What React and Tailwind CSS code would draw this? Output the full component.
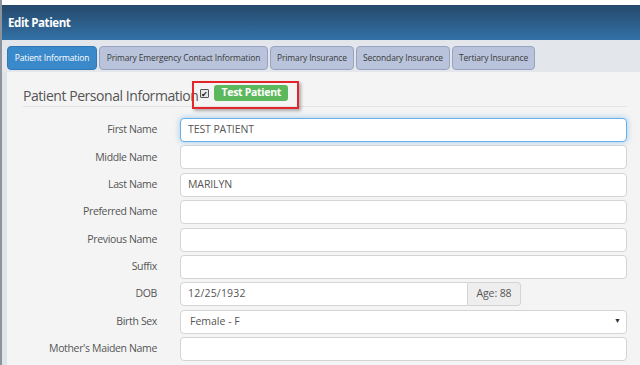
import React from 'react';

const tabs = [
    {label: 'Patient Information', w: 'w-[90px]', active: true},
    {label: 'Primary Emergency Contact Information', w: 'w-[169px]'},
    {label: 'Primary Insurance', w: 'w-[84px]'},
    {label: 'Secondary Insurance', w: 'w-[94px]'},
    {label: 'Tertiary Insurance', w: 'w-[83px]'},
];

function Field({label, children}) {
    return (
        <div className="flex items-center h-[24px]">
            <label className="w-[134px] text-right text-[10.5px] tracking-[-0.35px] text-[#555]">{label}</label>
            <div className="ml-[23px] flex-1">{children}</div>
        </div>
    );
}

function TextInput({value = '', focused}) {
    return (
        <div
            className={
                focused
                    ? 'h-[24px] rounded-[4px] border border-[#66afe9] bg-white px-[7px] flex items-center text-[10.5px] tracking-[-0.1px] text-[#555] shadow-[0_0_6px_rgba(102,175,233,0.6)]'
                    : 'h-[24px] rounded-[4px] border border-[#d4d4d4] bg-white px-[7px] flex items-center text-[10.5px] tracking-[-0.1px] text-[#555]'
            }
        >
            {value}
        </div>
    );
}

export default function App() {
    return (
        <div className="w-[640px] h-[365px] overflow-hidden bg-white flex font-['Open_Sans',sans-serif]">
            <div className="w-[2px] bg-[#8d939a]"/>
            <div className="flex-1 flex flex-col">
                <div className="h-[5px] bg-white"/>
                <div className="h-[35px] bg-gradient-to-b from-[#25496b] to-[#3271a6] flex items-center px-[6px]">
                    <span className="text-white font-bold text-[11.5px] tracking-[-0.4px]">Edit Patient</span>
                </div>
                <div className="h-[32px] bg-[#e3e7ec] flex items-start pt-[6px] pl-[5px] gap-[2px]">
                    {tabs.map((tab) => (
                        <div
                            key={tab.label}
                            className={
                                tab.active
                                    ? `${tab.w} h-[24px] rounded-[4px] border border-[#2f78b8] bg-[#3a89ca] text-white text-[8.5px] tracking-[-0.15px] whitespace-nowrap flex items-center justify-center`
                                    : `${tab.w} h-[24px] rounded-[4px] border border-[#98a3bd] bg-[#b9c4dc] text-[#3a3a3a] text-[8.5px] tracking-[-0.15px] whitespace-nowrap flex items-center justify-center`
                            }
                        >
                            {tab.label}
                        </div>
                    ))}
                </div>
                <div className="flex-1 flex">
                    <div className="w-[5px] bg-[#dfe4ea]"/>
                    <div className="flex-1 bg-[#f4f4f4] pl-[16px] pr-[13px] relative">
                        <div className="h-[35px] border-b border-[#e3e3e3] flex items-end pb-[2px]">
                            <span className="text-[14px] tracking-[-0.45px] text-[#555] leading-none mb-[1px]">Patient Personal Information</span>
                            <span className="ml-[2px] mb-[6px] w-[9px] h-[9px] border border-[#555] bg-[#e8e8e8] rounded-[1px] flex items-center justify-center text-[8px] leading-none text-[#222]">✔</span>
                            <span className="ml-[5px] mb-[3px] h-[16px] px-[7px] rounded-[3px] bg-[#5cb85c] text-white text-[10.5px] tracking-[-0.3px] font-bold flex items-center">Test Patient</span>
                        </div>
                        <div className="absolute left-[185px] top-[9px] w-[107px] h-[28px] border-2 border-[#e3262b] shadow-[2px_2px_3px_rgba(0,0,0,0.3)]"/>
                        <div className="pt-[11px] flex flex-col gap-[3.4px]">
                            <Field label="First Name"><TextInput value="TEST PATIENT" focused/></Field>
                            <Field label="Middle Name"><TextInput/></Field>
                            <Field label="Last Name"><TextInput value="MARILYN"/></Field>
                            <Field label="Preferred Name"><TextInput/></Field>
                            <Field label="Previous Name"><TextInput/></Field>
                            <Field label="Suffix"><TextInput/></Field>
                            <Field label="DOB">
                                <div className="flex w-[341px]">
                                    <div className="flex-1 h-[24px] rounded-l-[4px] border border-[#d4d4d4] bg-white px-[7px] flex items-center text-[10.5px] tracking-[0.2px] text-[#555]">12/25/1932</div>
                                    <div className="w-[53px] h-[24px] rounded-r-[4px] border border-l-0 border-[#d4d4d4] bg-[#eeeeee] flex items-center justify-center text-[10.5px] tracking-[-0.1px] text-[#555]">Age: 88</div>
                                </div>
                            </Field>
                            <Field label="Birth Sex">
                                <div className="h-[24px] rounded-[4px] border border-[#d4d4d4] bg-white pl-[9px] pr-[5px] flex items-center justify-between text-[10.5px] text-[#555]">
                                    <span>Female - F</span>
                                    <span className="text-[7px] text-[#333]">▼</span>
                                </div>
                            </Field>
                            <Field label="Mother's Maiden Name"><TextInput/></Field>
                        </div>
                    </div>
                </div>
            </div>
        </div>
    );
}
